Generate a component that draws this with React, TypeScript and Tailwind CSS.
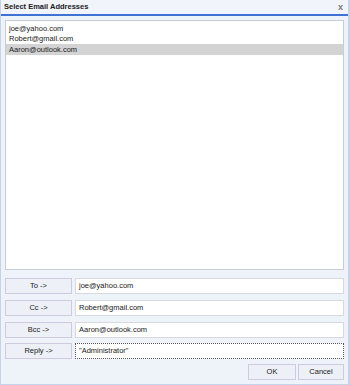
import React from "react";

const font = { fontFamily: '"Liberation Sans", Arial, sans-serif' };

function Btn({ label, className = "" }: { label: string; className?: string }) {
  return (
    <div
      className={`flex items-center justify-center h-[16px] border border-[#cfcadf] bg-[#eef0f7] text-[7.5px] text-[#202020] ${className}`}
    >
      {label}
    </div>
  );
}

function Field({ value, dotted = false }: { value: string; dotted?: boolean }) {
  return (
    <div
      className={`flex-1 flex items-center h-[16px] bg-white pl-[3px] text-[7.5px] text-[#202020] ${
        dotted ? "border border-dotted border-[#555]" : "border border-[#d6d9e0]"
      }`}
    >
      {value}
    </div>
  );
}

export default function App() {
  const items = ["joe@yahoo.com", "Robert@gmail.com", "Aaron@outlook.com"];
  return (
    <div
      className="w-[350px] h-[385px] bg-[#eef3f9] border-l border-r-2 border-b border-[#c4d3ea] flex flex-col leading-none"
      style={font}
    >
      <div className="h-[14px] flex items-center justify-between pl-[3px] pr-[5px] bg-[#f1f4fa]">
        <span className="font-bold text-[7.5px] text-[#1a1a1a]">Select Email Addresses</span>
        <span className="text-[9px] font-bold text-[#7a7a7a]">x</span>
      </div>
      <div className="h-[2px] bg-[#3f72d4]" />
      <div className="flex flex-col flex-1 px-[4px] pt-[4px]">
        <div className="h-[250px] bg-white border border-[#c8ccd4] pt-[2px]">
          {items.map((t, i) => (
            <div
              key={t}
              className={`h-[10.5px] flex items-center pl-[3px] text-[7.5px] text-[#1a1a1a] ${
                i === 2 ? "bg-[#d3d3d3]" : ""
              }`}
            >
              {t}
            </div>
          ))}
        </div>
        <div className="flex flex-col mt-[8px]">
          <div className="flex gap-[3px]">
            <Btn label="To ->" className="w-[67px]" />
            <Field value="joe@yahoo.com" />
          </div>
          <div className="flex gap-[3px] mt-[6px]">
            <Btn label="Cc ->" className="w-[67px]" />
            <Field value="Robert@gmail.com" />
          </div>
          <div className="flex gap-[3px] mt-[6px]">
            <Btn label="Bcc ->" className="w-[67px]" />
            <Field value="Aaron@outlook.com" />
          </div>
          <div className="flex gap-[3px] mt-[5px]">
            <Btn label="Reply ->" className="w-[67px]" />
            <Field value={'"Administrator"'} dotted />
          </div>
        </div>
        <div className="flex justify-end gap-[2px] mt-[5px]">
          <Btn label="OK" className="w-[48px]" />
          <Btn label="Cancel" className="w-[46px]" />
        </div>
      </div>
    </div>
  );
}
